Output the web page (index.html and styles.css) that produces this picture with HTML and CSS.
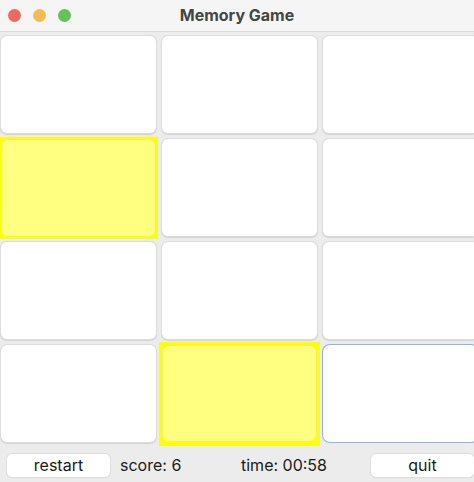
FILE: index.html
```html
<!DOCTYPE html>
<html>
<head>
<meta charset="utf-8">
<link rel="stylesheet" href="styles.css">
</head>
<body>
<div class="window">
  <div class="titlebar">
    <div class="lights">
      <span class="light red"></span>
      <span class="light yellow"></span>
      <span class="light green"></span>
    </div>
    <div class="title">Memory Game</div>
  </div>
  <div class="board">
    <div class="slot"><div class="card"></div></div>
    <div class="slot"><div class="card"></div></div>
    <div class="slot"><div class="card"></div></div>
    <div class="slot hit"><div class="card"></div></div>
    <div class="slot"><div class="card"></div></div>
    <div class="slot"><div class="card"></div></div>
    <div class="slot"><div class="card"></div></div>
    <div class="slot"><div class="card"></div></div>
    <div class="slot"><div class="card"></div></div>
    <div class="slot"><div class="card"></div></div>
    <div class="slot hit big"><div class="card"></div></div>
    <div class="slot"><div class="card focus"></div></div>
  </div>
  <div class="bar">
    <div class="btn">restart</div>
    <div class="score">score: 6</div>
    <div class="time">time: 00:58</div>
    <div class="btn">quit</div>
  </div>
</div>
</body>
</html>
```
FILE: styles.css
```css
html, body {
  margin: 0;
  padding: 0;
  width: 474px;
  height: 482px;
  overflow: hidden;
  background: #ececec;
  font-family: Inter, "Liberation Sans", sans-serif;
}
.window {
  width: 474px;
  height: 482px;
  display: flex;
  flex-direction: column;
  overflow: hidden;
}
.titlebar {
  height: 31px;
  flex: none;
  background: #f5f5f5;
  border-bottom: 1px solid #dadada;
  display: flex;
  align-items: center;
  position: relative;
}
.lights {
  display: flex;
  gap: 12px;
  padding-left: 8px;
  padding-top: 0px;
}
.light {
  width: 13px;
  height: 13px;
  border-radius: 50%;
  display: block;
}
.red { background: #ee6a5f; }
.yellow { background: #f5bd4f; }
.green { background: #61c454; }
.title {
  position: absolute;
  left: 0;
  right: 0;
  top: 5px;
  text-align: center;
  font-size: 16px;
  font-weight: 700;
  color: #454545;
}
.board {
  flex: none;
  display: grid;
  grid-template-columns: repeat(3, 161px);
  grid-auto-rows: 103px;
  margin-left: -2px;
  margin-top: 1px;
}
.slot {
  padding: 3px 3px 3px 3px;
  display: flex;
}
.card {
  flex: 1;
  background: #fff;
  border-radius: 6px;
  box-shadow: 0 0 0 1px #dcdcdc, 0 1px 1px 1px rgba(0,0,0,0.10);
}
.slot.hit {
  background: #ffff00;
  margin: 1px 1px 0 2px;
  padding: 3px 3px 3px 2px;
}
.slot.hit .card {
  background: #ffff80;
  box-shadow: 0 0 0 1px #f2f25a;
}
.slot.big {
  margin: 0px 0px -1px 0px;
  padding: 4px 4px 5px 4px;
}
.card.focus {
  box-shadow: 0 0 0 1px #8fb4e6;
  border-radius: 7px;
}
.bar {
  flex: none;
  display: flex;
  align-items: center;
  height: 34px;
  margin-top: 3px;
  padding-left: 7px;
  font-size: 16px;
  color: #1a1a1a;
}
.btn {
  width: 103px;
  height: 23px;
  background: #fff;
  border-radius: 5px;
  box-shadow: 0 0 0 1px #dedede, 0 1px 1px rgba(0,0,0,0.15);
  display: flex;
  align-items: center;
  justify-content: center;
  flex: none;
}
.score {
  width: 131px;
  padding-left: 10px;
  box-sizing: border-box;
  flex: none;
}
.time {
  width: 130px;
  flex: none;
}
```
